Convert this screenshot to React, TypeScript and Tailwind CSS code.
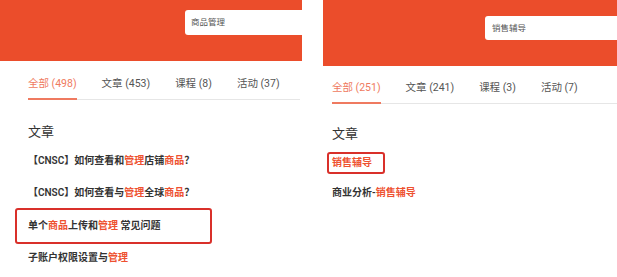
const FONT = { fontFamily: 'Roboto, "Noto Sans CJK SC", sans-serif' };

type Seg = { t: string; hl?: boolean };

function Line({ segs }: { segs: Seg[] }) {
  return (
    <span className="text-[10px] leading-[14px] font-semibold text-[#333] whitespace-pre">
      {segs.map((s, i) => (
        <span key={i} className={s.hl ? "text-[#ee5130]" : ""}>
          {s.t}
        </span>
      ))}
    </span>
  );
}

function Tabs({ tabs }: { tabs: string[] }) {
  return (
    <div className="flex gap-[25px] border-b border-[#e6e6e6]">
      {tabs.map((t, i) => (
        <div
          key={t}
          className={
            "text-[10.5px] leading-[14px] pb-[7px] border-b-2 -mb-px " +
            (i === 0 ? "text-[#ef7a60] border-[#ef7a60]" : "text-[#555] border-transparent")
          }
        >
          {t}
        </div>
      ))}
    </div>
  );
}

function LeftPanel() {
  return (
    <div className="w-[302px] shrink-0">
      <div className="h-[61px] bg-[#eb4d2b] flex justify-end items-start pt-[10px]">
        <div className="w-[117px] h-[25px] bg-white rounded-l-[3px] flex items-center pl-[6px] text-[8.5px] text-[#555]">
          商品管理
        </div>
      </div>
      <div className="pl-[28px] pr-[2px] pt-[16px]">
        <Tabs tabs={["全部 (498)", "文章 (453)", "课程 (8)", "活动 (37)"]} />
        <div className="mt-[19px] h-[26px] flex items-center text-[13px] text-[#333]">文章</div>
        <div className="h-[32px] flex items-center">
          <Line segs={[{ t: "【CNSC】如何查看和" }, { t: "管理", hl: true }, { t: "店铺" }, { t: "商品", hl: true }, { t: "？" }]} />
        </div>
        <div className="h-[32px] flex items-center">
          <Line segs={[{ t: "【CNSC】如何查看与" }, { t: "管理", hl: true }, { t: "全球" }, { t: "商品", hl: true }, { t: "？" }]} />
        </div>
        <div className="h-[33px] flex items-center">
          <div className="h-[36px] w-[197px] -ml-[13px] pl-[11px] flex items-center border-2 border-[#d9302a] rounded-[3px]">
            <Line segs={[{ t: "单个" }, { t: "商品", hl: true }, { t: "上传和" }, { t: "管理", hl: true }, { t: " 常见问题" }]} />
          </div>
        </div>
        <div className="h-[32px] flex items-center">
          <Line segs={[{ t: "子账户权限设置与" }, { t: "管理", hl: true }]} />
        </div>
      </div>
    </div>
  );
}

function RightPanel() {
  return (
    <div className="flex-1">
      <div className="h-[66px] bg-[#eb4d2b] flex justify-end items-start pt-[16px]">
        <div className="w-[132px] h-[24px] bg-white rounded-l-[3px] flex items-center pl-[7px] text-[8.5px] text-[#555]">
          销售辅导
        </div>
      </div>
      <div className="pl-[9px] pt-[15px]">
        <Tabs tabs={["全部 (251)", "文章 (241)", "课程 (3)", "活动 (7)"]} />
        <div className="mt-[17px] h-[26px] flex items-center text-[13px] text-[#333]">文章</div>
        <div className="h-[32px] flex items-center">
          <div className="h-[22px] -ml-[5px] pl-[3px] pr-[11px] flex items-center border-2 border-[#d9302a] rounded-[3px]">
            <Line segs={[{ t: "销售辅导", hl: true }]} />
          </div>
        </div>
        <div className="h-[28px] flex items-center">
          <Line segs={[{ t: "商业分析-" }, { t: "销售辅导", hl: true }]} />
        </div>
      </div>
    </div>
  );
}

export default function App() {
  return (
    <div className="w-[617px] h-[277px] bg-white flex gap-[21px] overflow-hidden" style={FONT}>
      <LeftPanel />
      <RightPanel />
    </div>
  );
}
